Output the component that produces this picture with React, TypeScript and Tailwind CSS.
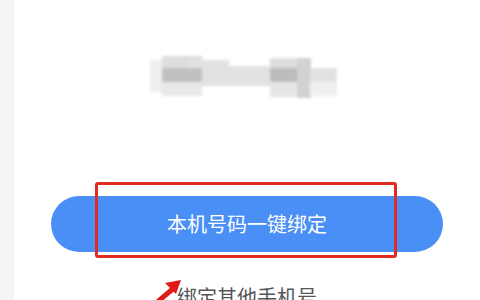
import React from "react";

// Blurred phone number mosaic
function Mosaic() {
  return (
    <svg width="200" height="50" viewBox="0 0 200 50">
      <defs>
        <filter id="soft" x="-10%" y="-20%" width="120%" height="140%">
          <feGaussianBlur stdDeviation="1.8" />
        </filter>
      </defs>
      <g filter="url(#soft)">
        <rect x="3" y="8" width="14" height="32" fill="#eeeeee" />
        <rect x="15" y="4" width="40" height="40" fill="#dddddd" />
        <rect x="42" y="8" width="40" height="14" fill="#e2e2e2" />
        <rect x="55" y="14" width="70" height="20" fill="#e2e2e2" />
        <rect x="15" y="16" width="40" height="14" fill="#c0c0c0" />
        <rect x="15" y="30" width="40" height="14" fill="#e8e8e8" />
        <rect x="123" y="6" width="40" height="12" fill="#dedede" />
        <rect x="123" y="16" width="40" height="14" fill="#bcbcbc" />
        <rect x="123" y="30" width="40" height="15" fill="#e6e6e6" />
        <rect x="150" y="6" width="14" height="40" fill="#d2d2d2" />
        <rect x="163" y="16" width="27" height="14" fill="#e2e2e2" />
        <rect x="163" y="30" width="27" height="14" fill="#f0f0f0" />
      </g>
    </svg>
  );
}

export default function App() {
  return (
    <div
      className="flex h-[300px] w-[480px] overflow-hidden bg-white"
      style={{ fontFamily: '"Noto Sans CJK SC", "Noto Sans", sans-serif' }}
    >
      {/* left edge strip */}
      <div className="w-[14px] shrink-0 bg-[#f4f4f4]" />

      <div className="flex flex-1 flex-col items-center">
        {/* top text, mostly cut off */}
        <p className="-mt-[22px] h-[24px] text-[20px] leading-[24px] text-[#ececec]">
          账号绑定
        </p>

        <div className="mt-[50px]">
          <Mosaic />
        </div>

        {/* main button with red highlight box */}
        <div className="relative mt-[94px]">
          <button className="flex h-[56px] w-[392px] items-center justify-center rounded-full bg-[#4a8ff5] text-[20px] text-white">
            本机号码一键绑定
          </button>
          <div className="absolute -top-[14px] left-[44px] h-[76px] w-[302px] rounded-[3px] border-[3px] border-[#e12a24]" />
        </div>

        {/* secondary link */}
        <div className="relative mt-[31px]">
          <p className="text-[20px] leading-[28px] text-[#555555]">绑定其他手机号</p>
          <svg
            className="absolute -left-[24px] -top-[6px]"
            width="34"
            height="28"
            viewBox="0 0 34 28"
          >
            <path d="M2 27 L22 10" stroke="#e01a14" strokeWidth="5" />
            <path d="M28 3 L12 6 L23 17 Z" fill="#e01a14" />
          </svg>
        </div>
      </div>
    </div>
  );
}
